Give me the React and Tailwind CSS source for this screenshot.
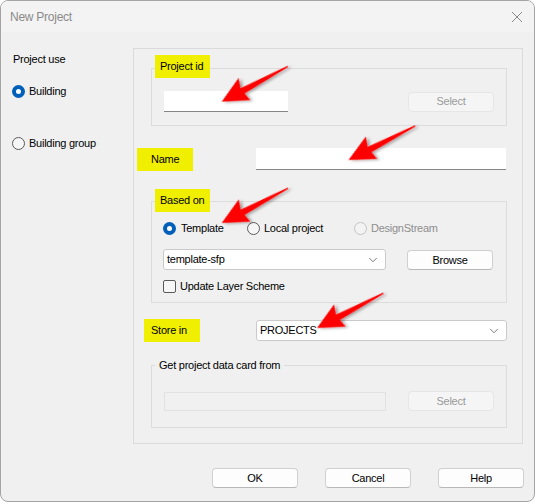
import { ChevronDown } from "lucide-react";

const font = { fontFamily: "'Liberation Sans', Arial, sans-serif" };

const Radio = ({ checked, disabled }) =>
  checked ? (
    <span className="w-[13px] h-[13px] rounded-full bg-[#005fb8] flex items-center justify-center shrink-0">
      <span className="w-[5px] h-[5px] rounded-full bg-white" />
    </span>
  ) : (
    <span
      className={`w-[13px] h-[13px] rounded-full border shrink-0 ${
        disabled ? "border-[#c4c4c4] bg-[#f3f3f3]" : "border-[#5a5a5a] bg-[#f6f6f6]"
      }`}
    />
  );

const Button = ({ children, disabled, className = "" }) => (
  <div
    className={`w-[86px] h-[20px] rounded-[4px] border flex items-center justify-center ${
      disabled
        ? "bg-[#f5f5f5] border-[#e6e6e6] text-[#9a9a9a]"
        : "bg-[#fdfdfd] border-[#d0d0d0] border-b-[#b8b8b8] text-black"
    } ${className}`}
  >
    {children}
  </div>
);

const Combo = ({ value, className = "" }) => (
  <div
    className={`h-[21px] bg-white border border-[#cacaca] rounded-[3px] flex items-center justify-between pl-[3px] pr-[5px] ${className}`}
  >
    <span>{value}</span>
    <ChevronDown size={14} strokeWidth={1.2} className="text-[#444]" />
  </div>
);

const Highlight = ({ children, className = "" }) => (
  <div className={`h-[23px] bg-[#f1ef00] flex items-center shrink-0 ${className}`}>{children}</div>
);

// red callout arrow, tip at (x, y), tail running off up-right
const Arrow = ({ x, y, angle }) => (
  <g transform={`translate(${x} ${y}) rotate(${angle})`} filter="url(#shade)">
    <polygon points="0,0 26,-13 23,-3 75,-0.8 75,0.6 24,3.5 26,12" fill="#ff0000" />
  </g>
);

export default function App() {
  return (
    <div className="relative w-[535px] h-[502px] bg-white text-[11px] tracking-[-0.25px] text-black" style={font}>
      <div className="w-[535px] h-[502px] border border-[#a4a4a4] rounded-[8px] overflow-hidden bg-[#f0f0f0] flex flex-col">
        {/* title bar */}
        <div className="h-[31px] shrink-0 bg-[#f3f3f3] flex items-center justify-between pl-[9px] pr-[11px]">
          <span className="text-[12px] text-[#8a8a8a]">New Project</span>
          <svg width="12" height="12" viewBox="0 0 12 12" className="text-[#8a8a8a]">
            <path d="M1 1L11 11M11 1L1 11" stroke="currentColor" strokeWidth="1" />
          </svg>
        </div>

        <div className="flex pt-[16px]">
          {/* project use */}
          <div className="w-[132px] shrink-0 pl-[12px]">
            <div className="mt-[4px] h-[15px] leading-[15px]">Project use</div>
            <div className="mt-[16px] h-[16px] flex items-center gap-[4px] -ml-[1px]">
              <Radio checked />
              <span>Building</span>
            </div>
            <div className="mt-[36px] h-[16px] flex items-center gap-[4px] -ml-[1px]">
              <Radio />
              <span>Building group</span>
            </div>
          </div>

          {/* main panel */}
          <div className="w-[390px] h-[396px] border border-[#dadada] shrink-0">
            {/* project id */}
            <div className="ml-[17px] mt-[19px] w-[356px] h-[58px] border border-[#dcdcdc]">
              <Highlight className="ml-[3px] -mt-[14px] w-[55px] pl-[5px]">Project id</Highlight>
              <div className="mt-[13px] ml-[12px] flex items-center">
                <div className="w-[124px] h-[21px] bg-white border-b border-[#858585]" />
                <Button disabled className="ml-[120px]">Select</Button>
              </div>
            </div>

            {/* name */}
            <div className="mt-[22px] flex items-start">
              <Highlight className="ml-[3px] w-[56px] pl-[14px]">Name</Highlight>
              <div className="ml-[63px] w-[250px] h-[22px] bg-white border-b border-[#858585]" />
            </div>

            {/* based on */}
            <div className="ml-[17px] mt-[30px] w-[356px] h-[102px] border border-[#dcdcdc]">
              <Highlight className="ml-[3px] -mt-[13px] w-[55px] pl-[5px]">Based on</Highlight>
              <div className="mt-[8px] ml-[11px] h-[16px] flex items-center">
                <div className="w-[84px] flex items-center gap-[5px]">
                  <Radio checked />
                  <span>Template</span>
                </div>
                <div className="w-[107px] flex items-center gap-[4px]">
                  <Radio />
                  <span>Local project</span>
                </div>
                <div className="flex items-center gap-[4px] text-[#8e8e8e]">
                  <Radio disabled />
                  <span>DesignStream</span>
                </div>
              </div>
              <div className="mt-[13px] ml-[11px] flex items-start">
                <Combo value="template-sfp" className="w-[223px]" />
                <Button className="ml-[21px] mt-[1px]">Browse</Button>
              </div>
              <div className="mt-[10px] ml-[11px] h-[13px] flex items-center gap-[4px]">
                <span className="w-[13px] h-[13px] rounded-[2px] border border-[#5a5a5a] bg-[#f6f6f6]" />
                <span>Update Layer Scheme</span>
              </div>
            </div>

            {/* store in */}
            <div className="mt-[16px] flex items-start">
              <Highlight className="ml-[10px] w-[56px] pl-[7px]">Store in</Highlight>
              <Combo value="PROJECTS" className="ml-[56px] mt-[1px] w-[251px]" />
            </div>

            {/* project data card */}
            <div className="ml-[17px] mt-[23px] w-[356px] h-[63px] border border-[#dcdcdc]">
              <div className="ml-[3px] -mt-[8px] w-fit h-[15px] px-[4px] bg-[#f0f0f0] leading-[15px]">
                Get project data card from
              </div>
              <div className="mt-[18px] ml-[12px] flex items-center">
                <div className="w-[222px] h-[19px] border border-[#e2e2e2] bg-[#f0f0f0]" />
                <Button disabled className="ml-[22px]">Select</Button>
              </div>
            </div>
          </div>
        </div>

        {/* dialog buttons */}
        <div className="mt-[24px] flex pl-[211px] gap-[27px]">
          <Button>OK</Button>
          <Button>Cancel</Button>
          <Button>Help</Button>
        </div>
      </div>

      <svg className="absolute top-0 left-0 pointer-events-none" width="535" height="502">
        <defs>
          <filter id="shade" x="-20%" y="-50%" width="140%" height="200%">
            <feDropShadow dx="2" dy="2" stdDeviation="1.5" floodColor="#000" floodOpacity="0.35" />
          </filter>
        </defs>
        <Arrow x={221.7} y={101.7} angle={-28} />
        <Arrow x={348.5} y={160} angle={-27} />
        <Arrow x={221.7} y={223} angle={-27.6} />
        <Arrow x={317} y={328} angle={-27.6} />
      </svg>
    </div>
  );
}
